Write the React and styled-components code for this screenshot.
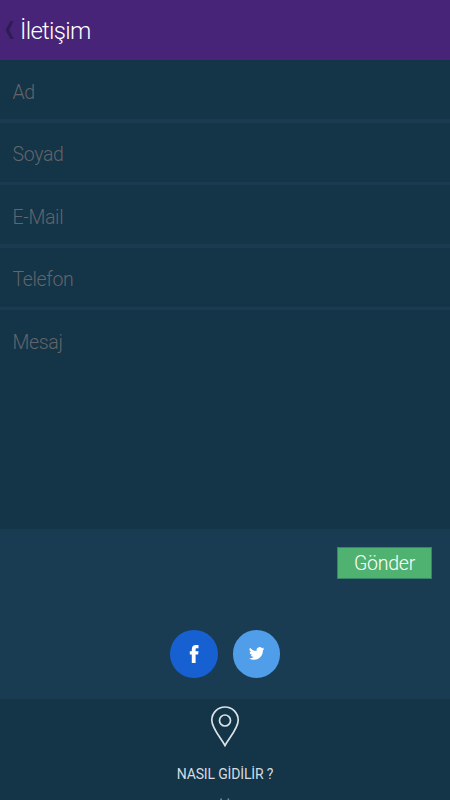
import React from "react";
import styled, {createGlobalStyle} from "styled-components";

const fields = ["Ad", "Soyad", "E-Mail", "Telefon"];

const App = () => {
    return (
        <>
            <GlobalStyle />
            <StyledPage>
                <StyledHeader>
                    <StyledBack viewBox="0 0 9 18">
                        <path d="M5.3 0H8.7L4.2 9L8.7 18H5.3L0.5 9Z" />
                    </StyledBack>
                    <StyledTitle>İletişim</StyledTitle>
                </StyledHeader>
                <StyledForm>
                    {fields.map((field) => (
                        <StyledInput key={field} placeholder={field} />
                    ))}
                    <StyledTextarea placeholder="Mesaj" />
                </StyledForm>
                <StyledActions>
                    <Button>Gönder</Button>
                </StyledActions>
                <StyledSocial>
                    <StyledCircle $color="#1760d2" aria-label="Facebook">
                        <svg width="10" height="18" viewBox="0 0 10 18">
                            <path d="M2.8 18V9.6H0.8V6.2H2.8V4.4C2.8 1.5 4.4 0 6.9 0H9.5V3.3H7.9C6.9 3.3 6.6 3.7 6.6 4.5V6.2H9.5L9.1 9.6H6.6V18Z" />
                        </svg>
                    </StyledCircle>
                    <StyledCircle $color="#509eea" aria-label="Twitter">
                        <svg width="15.5" height="13" viewBox="0 2 24 20" preserveAspectRatio="none">
                            <path d="M23.95 4.57a10 10 0 0 1-2.82.77 4.96 4.96 0 0 0 2.16-2.72c-.95.55-2 .95-3.13 1.18a4.92 4.92 0 0 0-8.38 4.48C7.69 8.1 4.07 6.13 1.64 3.16a4.92 4.92 0 0 0 1.52 6.57 4.9 4.9 0 0 1-2.23-.61v.06a4.92 4.92 0 0 0 3.95 4.83 5 5 0 0 1-2.21.08 4.94 4.94 0 0 0 4.6 3.42A9.87 9.87 0 0 1 0 19.54a14 14 0 0 0 7.55 2.21c9.05 0 14-7.5 14-13.98l-.02-.64a10 10 0 0 0 2.46-2.55z" />
                        </svg>
                    </StyledCircle>
                </StyledSocial>
                <StyledFooter>
                    <StyledPin viewBox="0 0 30 42">
                        <path d="M15 39.5C10.5 31.5 1.8 22 1.8 14.2A13.2 13.2 0 0 1 28.2 14.2C28.2 22 19.5 31.5 15 39.5Z" />
                        <circle cx="15" cy="14.5" r="5.5" />
                    </StyledPin>
                    <StyledLabel>NASIL GİDİLİR ?</StyledLabel>
                    <StyledPhone viewBox="0 0 30 30">
                        <path d="M11.1 1.4V6M18.4 1.4V6" />
                    </StyledPhone>
                </StyledFooter>
            </StyledPage>
        </>
    );
};

const GlobalStyle = createGlobalStyle`
  * {
    box-sizing: border-box;
  }

  body {
    margin: 0;
    overflow: hidden;
    background-color: #143447;
    font-family: Roboto, sans-serif;
    font-weight: 300;
  }
`;

const StyledPage = styled.div`
  display: flex;
  flex-direction: column;
  height: 800px;
  overflow: hidden;
  background-color: #193c52;
`;

const StyledHeader = styled.header`
  display: flex;
  flex: none;
  align-items: center;
  height: 60px;
  padding-left: 5px;
  background-color: #472478;
`;

const StyledBack = styled.svg`
  width: 9px;
  height: 18px;
  fill: #2f1c57;
`;

const StyledTitle = styled.h1`
  margin: 1px 0 0 6px;
  font-size: 24px;
  font-weight: 300;
  line-height: 30px;
  letter-spacing: -0.7px;
  color: white;
`;

const StyledForm = styled.form`
  display: flex;
  flex: none;
  flex-direction: column;
  gap: 3.6px;
  height: 469px;
`;

const StyledInput = styled.input`
  flex: none;
  height: 59px;
  padding: 5px 12.5px 0;
  border: none;
  border-radius: 0;
  outline: none;
  background-color: #143447;
  font: 300 19.5px Roboto, sans-serif;
  letter-spacing: -0.35px;
  color: white;

  &::placeholder {
    color: #62656b;
  }
`;

const StyledTextarea = styled(StyledInput).attrs({as: "textarea"})`
  flex: 1;
  padding-top: 21px;
  resize: none;
`;

const StyledActions = styled.div`
  display: flex;
  flex: none;
  justify-content: flex-end;
  height: 101px;
  padding: 18px 18px 0 0;
`;

const Button = styled.button`
  width: 95px;
  height: 32px;
  padding: 0;
  border: 1px solid #38866a;
  background-color: #4fb271;
  font: 300 19.5px Roboto, sans-serif;
  letter-spacing: -0.25px;
  color: white;
`;

const StyledSocial = styled.div`
  display: flex;
  flex: none;
  justify-content: center;
  gap: 15px;
  height: 69px;
`;

const StyledCircle = styled.a`
  display: flex;
  align-items: center;
  justify-content: center;
  width: 47.5px;
  height: 47.5px;
  border-radius: 50%;
  background-color: ${({$color}) => $color};

  svg {
    fill: white;
  }
`;

const StyledFooter = styled.footer`
  display: flex;
  flex: 1;
  flex-direction: column;
  align-items: center;
  min-height: 0;
  padding-top: 7px;
  background-color: #143447;
`;

const StyledPin = styled.svg`
  flex: none;
  width: 30px;
  height: 42px;
  fill: none;
  stroke: #dce3e7;
  stroke-width: 1.7;
`;

const StyledLabel = styled.p`
  margin: 17px 0 0;
  font-size: 14px;
  font-weight: 400;
  line-height: 18px;
  letter-spacing: -0.15px;
  color: #d5dce1;
`;

const StyledPhone = styled.svg`
  flex: none;
  width: 30px;
  height: 30px;
  margin-top: 14px;
  fill: none;
  stroke: #7f929d;
  stroke-width: 1.5;
`;

export default App;
